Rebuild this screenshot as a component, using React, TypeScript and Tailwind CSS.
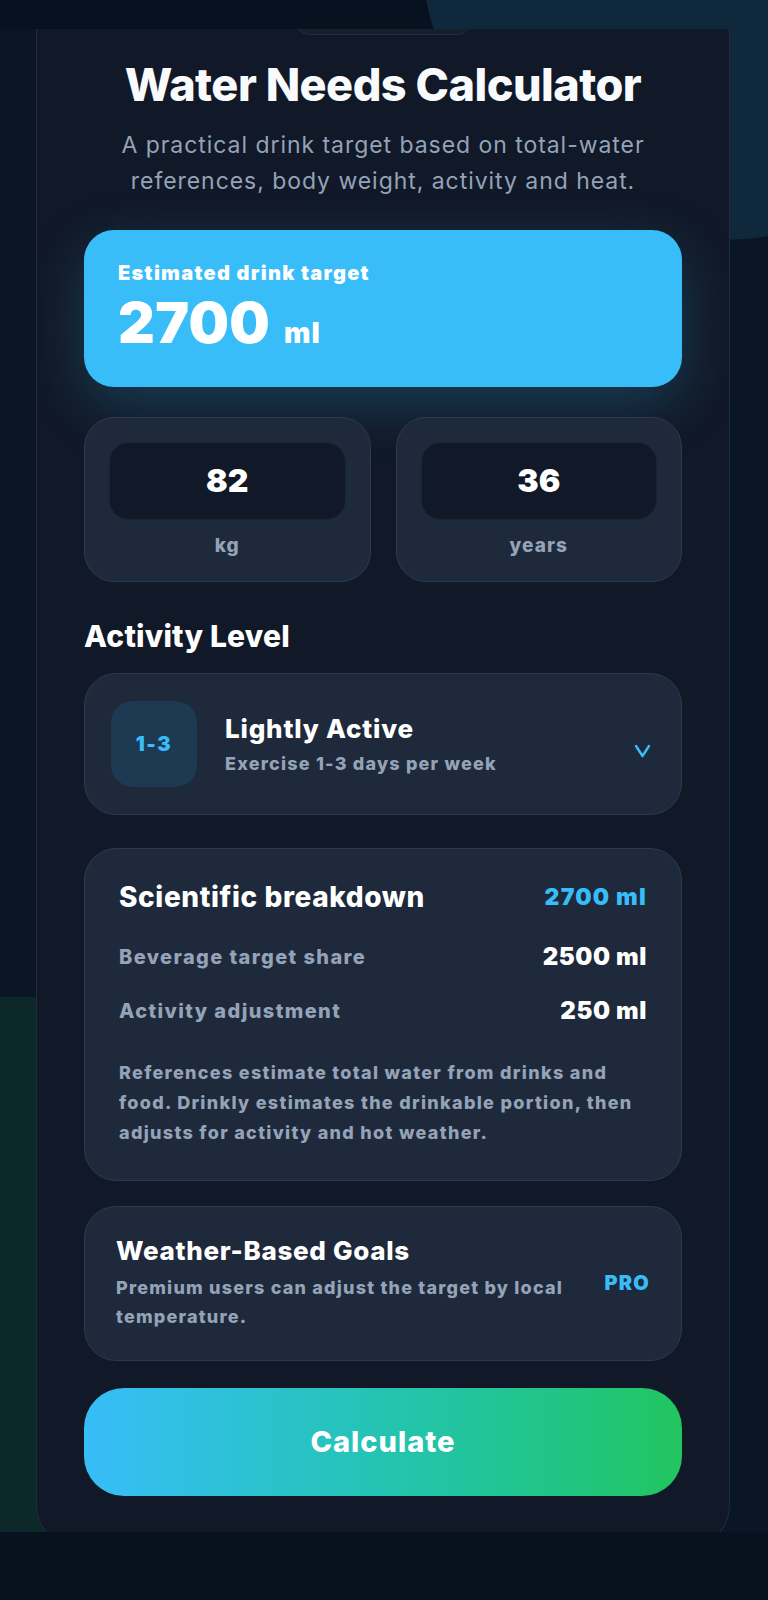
import { ReactNode } from 'react'

const font = { fontFamily: 'Inter, "Noto Sans", sans-serif' }

function InputCard({ value, unit }: { value: string; unit: string }) {
  return (
    <div className="rounded-[30px] border-[1.5px] border-[#2c3a4f] bg-[#1e293b] px-6 pt-6 pb-[23px]">
      <div className="flex h-[78px] items-center justify-center rounded-[20px] border border-[#1b2434] bg-[#111827] text-[32px] font-black text-white">
        {value}
      </div>
      <div className="mt-[14px] text-center text-[19px] leading-6 font-extrabold tracking-[1.1px] text-[#94a3b8]">{unit}</div>
    </div>
  )
}

function Row({ label, value }: { label: string; value: string }) {
  return (
    <div className="flex items-center justify-between leading-8">
      <span className="text-[20px] font-extrabold tracking-[1.4px] text-[#94a3b8]">{label}</span>
      <span className="text-[24px] font-black tracking-[0.6px] text-white">{value}</span>
    </div>
  )
}

function Card({ children, className }: { children: ReactNode; className?: string }) {
  return (
    <div className={'rounded-[32px] border-[1.5px] border-[#2c3a4f] bg-[#1e293b] ' + (className ?? '')}>
      {children}
    </div>
  )
}

export default function App() {
  return (
    <div className="relative h-[1600px] w-[768px] overflow-hidden bg-[#0a1626]" style={font}>
      {/* backdrop */}
      <div className="absolute top-0 left-0 h-[29px] w-full bg-[#08111f]" />
      <div className="absolute top-[-360px] left-[420px] h-[600px] w-[600px] rounded-full bg-[#0f283b]" />
      <div className="absolute top-[997px] left-0 h-[560px] w-[140px] rounded-tr-[40px] bg-[#0c2829]" />

      {/* phone frame */}
      <div className="absolute top-[29px] left-[36px] h-[1520px] w-[694px] overflow-hidden rounded-b-[44px] border-x-[1.5px] border-b-[1.5px] border-[#222c3c] bg-[#111827] px-[47px] pt-[30px]">
        <div className="absolute top-[-30px] left-[256px] h-[36px] w-[181px] rounded-full border border-[#262f40] bg-[#161d2b]" />

        <h1 className="text-center text-[45px] leading-[52px] font-extrabold tracking-[-0.5px] text-[#f8fafc]">
          Water Needs Calculator
        </h1>
        <p className="mx-auto mt-[16px] w-[590px] text-center text-[23px] leading-[36px] tracking-[0.95px] text-[#94a3b8]">
          A practical drink target based on total-water references, body weight, activity and heat.
        </p>

        <div className="mt-[31px] h-[157px] rounded-[30px] bg-[#38bdf8] px-[34px] pt-[31px] shadow-[0_18px_60px_rgba(56,189,248,0.22)]">
          <div className="text-[20px] leading-6 font-black tracking-[1.3px] text-white">Estimated drink target</div>
          <div className="mt-[8px] flex items-baseline gap-[14px] leading-[60px] text-white">
            <span className="text-[57px] font-black tracking-[0.3px]">2700</span>
            <span className="text-[28px] font-black tracking-[1px]">ml</span>
          </div>
        </div>

        <div className="mt-[30px] grid grid-cols-2 gap-[25px]">
          <InputCard value="82" unit="kg" />
          <InputCard value="36" unit="years" />
        </div>

        <h2 className="mt-[36px] text-[30px] leading-9 font-extrabold tracking-[0.2px] text-white">Activity Level</h2>

        <Card className="mt-[19px] flex items-center gap-7 px-[26px] py-[27px]">
          <div className="flex h-[86px] w-[86px] items-center justify-center rounded-[22px] bg-[#1e3a52] text-[20px] font-black tracking-[1.5px] text-[#38bdf8]">
            1-3
          </div>
          <div className="flex-1">
            <div className="text-[26px] leading-8 font-extrabold tracking-[0.8px] text-white">Lightly Active</div>
            <div className="mt-[7px] text-[18px] leading-6 font-extrabold tracking-[1.2px] text-[#94a3b8]">Exercise 1-3 days per week</div>
          </div>
          <svg width="17" height="14" viewBox="0 0 17 14" className="mt-[14px] mr-[4px]">
            <polyline points="2,2 8.5,12 15,2" fill="none" stroke="#38bdf8" strokeWidth="2.4" strokeLinecap="round" strokeLinejoin="round" />
          </svg>
        </Card>

        <Card className="mt-[33px] px-[34px] pt-[31px] pb-[32px]">
          <div className="flex items-center justify-between leading-[34px]">
            <span className="text-[28px] font-extrabold tracking-[0.6px] text-white">Scientific breakdown</span>
            <span className="text-[23px] font-black tracking-[1.2px] text-[#38bdf8]">2700 ml</span>
          </div>
          <div className="mt-[27px]">
            <Row label="Beverage target share" value="2500 ml" />
          </div>
          <div className="mt-[22px]">
            <Row label="Activity adjustment" value="250 ml" />
          </div>
          <p className="mt-[31px] text-[18px] leading-[30px] font-extrabold tracking-[1.3px] text-[#94a3b8]">
            References estimate total water from drinks and food. Drinkly estimates the drinkable portion, then adjusts for activity and hot weather.
          </p>
        </Card>

        <Card className="mt-[25px] flex items-center gap-6 pt-[28px] pr-[31px] pb-[29px] pl-[31px]">
          <div className="flex-1">
            <div className="text-[26px] leading-8 font-extrabold tracking-[0.7px] text-white">Weather-Based Goals</div>
            <p className="mt-[6px] text-[18px] leading-[29px] font-extrabold tracking-[1.2px] text-[#94a3b8]">
              Premium users can adjust the target by local temperature.
            </p>
          </div>
          <span className="text-[20px] font-black tracking-[1.2px] text-[#38bdf8]">PRO</span>
        </Card>

        <button className="mt-[27px] flex h-[108px] w-full items-center justify-center rounded-[40px] bg-gradient-to-r from-[#38bdf8] to-[#22c55e] text-[29px] font-extrabold tracking-[1px] text-white">
          Calculate
        </button>
      </div>

      {/* bottom bar */}
      <div className="absolute top-[1532px] left-0 h-[68px] w-full bg-[#08111e]" />
    </div>
  )
}
